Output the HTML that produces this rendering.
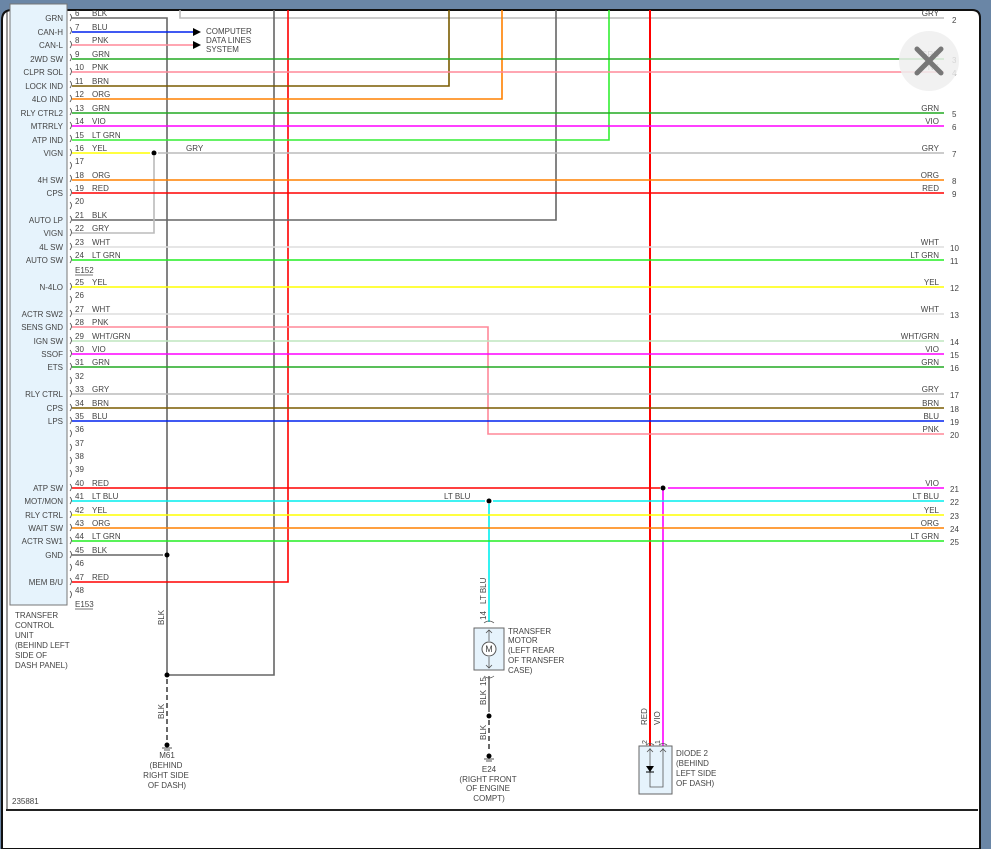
<!DOCTYPE html>
<html><head><meta charset="utf-8"><style>
html,body{margin:0;padding:0;background:#6a86a6;}
svg{display:block;}
text{font-family:"Liberation Sans",sans-serif;font-size:8px;fill:#444;}
</style></head><body>
<svg width="991" height="849" viewBox="0 0 991 849" xmlns="http://www.w3.org/2000/svg">
<rect x="0" y="0" width="991" height="849" fill="#6a86a6"/>
<path d="M2,849 L2,20 Q2,10 12,10 L972,10 Q980,10 980,18 L980,849 Z" fill="#fff" stroke="#111" stroke-width="2"/>
<line x1="7" y1="12" x2="7" y2="810" stroke="#333" stroke-width="1"/>
<line x1="6" y1="810" x2="978" y2="810" stroke="#222" stroke-width="2"/>
<rect x="10" y="4" width="57" height="601" fill="#e6f3fc" stroke="#777" stroke-width="1"/>
<g fill="none" stroke-width="1.6">
<!-- verticals from top -->
<polyline points="72,18 167,18 167,675" stroke="#666"/>
<polyline points="180,10 180,18 944,18" stroke="#bbb"/>
<polyline points="274,10 274,675 167,675" stroke="#666"/>
<polyline points="288,10 288,582 72,582" stroke="#f00"/>
<polyline points="449,10 449,86 72,86" stroke="#7a5c00"/>
<polyline points="502,10 502,99 72,99" stroke="#ff8000"/>
<polyline points="556,10 556,220 72,220" stroke="#666"/>
<polyline points="609,10 609,140 72,140" stroke="#33ee33"/>
<line x1="650" y1="10" x2="650" y2="746" stroke="#f00" stroke-width="2"/>
<polyline points="663,488 663,746" stroke="#f0f"/>
<polyline points="72,153 150,153" stroke="#ff0"/>
<polyline points="158,153 944,153" stroke="#bbb"/>
<polyline points="154,156 154,233 72,233" stroke="#bbb"/>
<line x1="72" y1="32" x2="193" y2="32" stroke="#0022ee"/>
<line x1="72" y1="45" x2="193" y2="45" stroke="#ff8899"/>
<line x1="72" y1="59" x2="944" y2="59" stroke="#22aa22"/>
<line x1="72" y1="72" x2="944" y2="72" stroke="#ff8899"/>
<line x1="72" y1="113" x2="944" y2="113" stroke="#22aa22"/>
<line x1="72" y1="126" x2="944" y2="126" stroke="#f0f"/>
<line x1="72" y1="180" x2="944" y2="180" stroke="#ff8000"/>
<line x1="72" y1="193" x2="944" y2="193" stroke="#f00"/>
<line x1="72" y1="247" x2="944" y2="247" stroke="#ddd"/>
<line x1="72" y1="260" x2="944" y2="260" stroke="#22ee22"/>
<line x1="72" y1="287" x2="944" y2="287" stroke="#ff0"/>
<line x1="72" y1="314" x2="944" y2="314" stroke="#ddd"/>
<polyline points="72,327 488,327 488,434 944,434" stroke="#ff8899"/>
<line x1="72" y1="341" x2="944" y2="341" stroke="#bfe6bf"/>
<line x1="72" y1="354" x2="944" y2="354" stroke="#f0f"/>
<line x1="72" y1="367" x2="944" y2="367" stroke="#22aa22"/>
<line x1="72" y1="394" x2="944" y2="394" stroke="#bbb"/>
<line x1="72" y1="408" x2="944" y2="408" stroke="#7a5c00"/>
<line x1="72" y1="421" x2="944" y2="421" stroke="#0022ee"/>
<line x1="72" y1="488" x2="660" y2="488" stroke="#f00"/>
<line x1="668" y1="488" x2="944" y2="488" stroke="#f0f"/>
<line x1="72" y1="501" x2="485" y2="501" stroke="#00eeee"/>
<line x1="493" y1="501" x2="944" y2="501" stroke="#00eeee"/>
<line x1="489" y1="504" x2="489" y2="622" stroke="#00eeee"/>
<line x1="72" y1="515" x2="944" y2="515" stroke="#ff0"/>
<line x1="72" y1="528" x2="944" y2="528" stroke="#ff8000"/>
<line x1="72" y1="541" x2="944" y2="541" stroke="#22ee22"/>
<line x1="72" y1="555" x2="163" y2="555" stroke="#666"/>
<line x1="489" y1="676" x2="489" y2="712" stroke="#666"/>
<line x1="167" y1="679" x2="167" y2="742" stroke="#444" stroke-dasharray="5,3"/>
<line x1="489" y1="720" x2="489" y2="752" stroke="#444" stroke-dasharray="5,3"/>
</g>
<!-- arrows -->
<polygon points="193,28 201,32 193,36" fill="#000"/>
<polygon points="193,41 201,45 193,49" fill="#000"/>
<text x="206" y="34">COMPUTER</text><text x="206" y="43">DATA LINES</text><text x="206" y="52">SYSTEM</text>
<!-- dots -->
<g fill="#000"><circle cx="154" cy="153" r="2.5"/><circle cx="167" cy="555" r="2.5"/><circle cx="167" cy="675" r="2.5"/><circle cx="489" cy="501" r="2.5"/><circle cx="663" cy="488" r="2.5"/><circle cx="489" cy="716" r="2.5"/><circle cx="167" cy="745" r="2.5"/><circle cx="489" cy="756" r="2.5"/></g>
<g stroke="#555" stroke-width="1"><line x1="162" y1="748" x2="172" y2="748"/><line x1="164" y1="750" x2="170" y2="750"/><line x1="484" y1="759" x2="494" y2="759"/><line x1="486" y1="761" x2="492" y2="761"/></g>
<!-- pin labels -->
<g>
<text x="63" y="21" text-anchor="end">GRN</text>
<text x="63" y="35" text-anchor="end">CAN-H</text>
<text x="63" y="48" text-anchor="end">CAN-L</text>
<text x="63" y="62" text-anchor="end">2WD SW</text>
<text x="63" y="75" text-anchor="end">CLPR SOL</text>
<text x="63" y="89" text-anchor="end">LOCK IND</text>
<text x="63" y="102" text-anchor="end">4LO IND</text>
<text x="63" y="116" text-anchor="end">RLY CTRL2</text>
<text x="63" y="129" text-anchor="end">MTRRLY</text>
<text x="63" y="143" text-anchor="end">ATP IND</text>
<text x="63" y="156" text-anchor="end">VIGN</text>
<text x="63" y="183" text-anchor="end">4H SW</text>
<text x="63" y="196" text-anchor="end">CPS</text>
<text x="63" y="223" text-anchor="end">AUTO LP</text>
<text x="63" y="236" text-anchor="end">VIGN</text>
<text x="63" y="250" text-anchor="end">4L SW</text>
<text x="63" y="263" text-anchor="end">AUTO SW</text>
<text x="63" y="290" text-anchor="end">N-4LO</text>
<text x="63" y="317" text-anchor="end">ACTR SW2</text>
<text x="63" y="330" text-anchor="end">SENS GND</text>
<text x="63" y="344" text-anchor="end">IGN SW</text>
<text x="63" y="357" text-anchor="end">SSOF</text>
<text x="63" y="370" text-anchor="end">ETS</text>
<text x="63" y="397" text-anchor="end">RLY CTRL</text>
<text x="63" y="411" text-anchor="end">CPS</text>
<text x="63" y="424" text-anchor="end">LPS</text>
<text x="63" y="491" text-anchor="end">ATP SW</text>
<text x="63" y="504" text-anchor="end">MOT/MON</text>
<text x="63" y="518" text-anchor="end">RLY CTRL</text>
<text x="63" y="531" text-anchor="end">WAIT SW</text>
<text x="63" y="544" text-anchor="end">ACTR SW1</text>
<text x="63" y="558" text-anchor="end">GND</text>
<text x="63" y="585" text-anchor="end">MEM B/U</text>
</g>
<!-- pin numbers & wire color labels -->
<g>
<text x="75" y="16">6</text><text x="92" y="16">BLK</text>
<text x="75" y="30">7</text><text x="92" y="30">BLU</text>
<text x="75" y="43">8</text><text x="92" y="43">PNK</text>
<text x="75" y="57">9</text><text x="92" y="57">GRN</text>
<text x="75" y="70">10</text><text x="92" y="70">PNK</text>
<text x="75" y="84">11</text><text x="92" y="84">BRN</text>
<text x="75" y="97">12</text><text x="92" y="97">ORG</text>
<text x="75" y="111">13</text><text x="92" y="111">GRN</text>
<text x="75" y="124">14</text><text x="92" y="124">VIO</text>
<text x="75" y="138">15</text><text x="92" y="138">LT GRN</text>
<text x="75" y="151">16</text><text x="92" y="151">YEL</text><text x="186" y="151">GRY</text>
<text x="75" y="164">17</text>
<text x="75" y="178">18</text><text x="92" y="178">ORG</text>
<text x="75" y="191">19</text><text x="92" y="191">RED</text>
<text x="75" y="204">20</text>
<text x="75" y="218">21</text><text x="92" y="218">BLK</text>
<text x="75" y="231">22</text><text x="92" y="231">GRY</text>
<text x="75" y="245">23</text><text x="92" y="245">WHT</text>
<text x="75" y="258">24</text><text x="92" y="258">LT GRN</text>
<text x="75" y="273">E152</text><line x1="75" y1="275" x2="93" y2="275" stroke="#444" stroke-width="0.8"/>
<text x="75" y="285">25</text><text x="92" y="285">YEL</text>
<text x="75" y="298">26</text>
<text x="75" y="312">27</text><text x="92" y="312">WHT</text>
<text x="75" y="325">28</text><text x="92" y="325">PNK</text>
<text x="75" y="339">29</text><text x="92" y="339">WHT/GRN</text>
<text x="75" y="352">30</text><text x="92" y="352">VIO</text>
<text x="75" y="365">31</text><text x="92" y="365">GRN</text>
<text x="75" y="379">32</text>
<text x="75" y="392">33</text><text x="92" y="392">GRY</text>
<text x="75" y="406">34</text><text x="92" y="406">BRN</text>
<text x="75" y="419">35</text><text x="92" y="419">BLU</text>
<text x="75" y="432">36</text>
<text x="75" y="446">37</text>
<text x="75" y="459">38</text>
<text x="75" y="472">39</text>
<text x="75" y="486">40</text><text x="92" y="486">RED</text>
<text x="75" y="499">41</text><text x="92" y="499">LT BLU</text><text x="444" y="499">LT BLU</text>
<text x="75" y="513">42</text><text x="92" y="513">YEL</text>
<text x="75" y="526">43</text><text x="92" y="526">ORG</text>
<text x="75" y="539">44</text><text x="92" y="539">LT GRN</text>
<text x="75" y="553">45</text><text x="92" y="553">BLK</text>
<text x="75" y="566">46</text>
<text x="75" y="580">47</text><text x="92" y="580">RED</text>
<text x="75" y="593">48</text>
<text x="75" y="607">E153</text><line x1="75" y1="609" x2="93" y2="609" stroke="#444" stroke-width="0.8"/>
</g>
<!-- connector arcs -->
<g fill="none" stroke="#444" stroke-width="0.8">
<path d="M70,14 q3,3 0,7 M70,27 q3,3 0,7 M70,41 q3,3 0,7 M70,54 q3,3 0,7 M70,68 q3,3 0,7 M70,81 q3,3 0,7 M70,95 q3,3 0,7 M70,108 q3,3 0,7 M70,122 q3,3 0,7 M70,135 q3,3 0,7 M70,149 q3,3 0,7 M70,162 q3,3 0,7 M70,175 q3,3 0,7 M70,189 q3,3 0,7 M70,202 q3,3 0,7 M70,216 q3,3 0,7 M70,229 q3,3 0,7 M70,243 q3,3 0,7 M70,256 q3,3 0,7"/>
<path d="M70,283 q3,3 0,7 M70,296 q3,3 0,7 M70,310 q3,3 0,7 M70,323 q3,3 0,7 M70,337 q3,3 0,7 M70,350 q3,3 0,7 M70,363 q3,3 0,7 M70,377 q3,3 0,7 M70,390 q3,3 0,7 M70,404 q3,3 0,7 M70,417 q3,3 0,7 M70,430 q3,3 0,7 M70,444 q3,3 0,7 M70,457 q3,3 0,7 M70,470 q3,3 0,7 M70,484 q3,3 0,7 M70,497 q3,3 0,7 M70,511 q3,3 0,7 M70,524 q3,3 0,7 M70,537 q3,3 0,7 M70,551 q3,3 0,7 M70,564 q3,3 0,7 M70,578 q3,3 0,7 M70,591 q3,3 0,7"/>
</g>
<!-- right labels -->
<g text-anchor="end">
<text x="939" y="16">GRY</text><text x="939" y="57">GRN</text><text x="939" y="70">PNK</text>
<text x="939" y="111">GRN</text><text x="939" y="124">VIO</text><text x="939" y="151">GRY</text>
<text x="939" y="178">ORG</text><text x="939" y="191">RED</text><text x="939" y="245">WHT</text>
<text x="939" y="258">LT GRN</text><text x="939" y="285">YEL</text><text x="939" y="312">WHT</text>
<text x="939" y="339">WHT/GRN</text><text x="939" y="352">VIO</text><text x="939" y="365">GRN</text>
<text x="939" y="392">GRY</text><text x="939" y="406">BRN</text><text x="939" y="419">BLU</text>
<text x="939" y="432">PNK</text><text x="939" y="486">VIO</text><text x="939" y="499">LT BLU</text>
<text x="939" y="513">YEL</text><text x="939" y="526">ORG</text><text x="939" y="539">LT GRN</text>
</g>
<g>
<text x="952" y="23">2</text><text x="952" y="63">3</text><text x="952" y="76">4</text><text x="952" y="117">5</text><text x="952" y="130">6</text><text x="952" y="157">7</text><text x="952" y="184">8</text><text x="952" y="197">9</text>
<text x="950" y="251">10</text><text x="950" y="264">11</text><text x="950" y="291">12</text><text x="950" y="318">13</text><text x="950" y="345">14</text><text x="950" y="358">15</text><text x="950" y="371">16</text><text x="950" y="398">17</text><text x="950" y="412">18</text><text x="950" y="425">19</text><text x="950" y="438">20</text><text x="950" y="492">21</text><text x="950" y="505">22</text><text x="950" y="519">23</text><text x="950" y="532">24</text><text x="950" y="545">25</text>
</g>
<!-- close button -->
<circle cx="929" cy="61" r="30" fill="#eee" fill-opacity="0.85"/>
<g stroke="#777" stroke-width="5" stroke-linecap="round"><line x1="917" y1="49" x2="941" y2="73"/><line x1="941" y1="49" x2="917" y2="73"/></g>
<!-- TCU label -->
<g><text x="15" y="618">TRANSFER</text><text x="15" y="628">CONTROL</text><text x="15" y="638">UNIT</text><text x="15" y="648">(BEHIND LEFT</text><text x="15" y="658">SIDE OF</text><text x="15" y="668">DASH PANEL)</text></g>
<text transform="translate(164,625) rotate(-90)">BLK</text>
<text transform="translate(164,719) rotate(-90)">BLK</text>
<g text-anchor="middle"><text x="167" y="758">M61</text><text x="166" y="768">(BEHIND</text><text x="166" y="778">RIGHT SIDE</text><text x="167" y="788">OF DASH)</text></g>
<!-- motor -->
<text transform="translate(486,604) rotate(-90)">LT BLU</text>
<text transform="translate(486,620) rotate(-90)">14</text>
<rect x="474" y="628" width="30" height="42" fill="#e6f3fc" stroke="#666"/>
<circle cx="489" cy="649" r="7" fill="#fff" stroke="#555"/>
<text x="489" y="652" text-anchor="middle" style="font-size:9px">M</text>
<g stroke="#555" fill="none" stroke-width="0.8"><path d="M489,630 V641 M489,657 V668 M486,633 l3,-3 l3,3 M486,665 l3,3 l3,-3 M484,623 q5,-4 10,0 M484,676 q5,4 10,0"/></g>
<g><text x="508" y="634">TRANSFER</text><text x="508" y="643">MOTOR</text><text x="508" y="653">(LEFT REAR</text><text x="508" y="663">OF TRANSFER</text><text x="508" y="673">CASE)</text></g>
<text transform="translate(486,686) rotate(-90)">15</text>
<text transform="translate(486,705) rotate(-90)">BLK</text>
<text transform="translate(486,740) rotate(-90)">BLK</text>
<g text-anchor="middle"><text x="489" y="772">E24</text><text x="488" y="782">(RIGHT FRONT</text><text x="488" y="791">OF ENGINE</text><text x="489" y="801">COMPT)</text></g>
<!-- diode -->
<text transform="translate(647,725) rotate(-90)">RED</text>
<text transform="translate(660,725) rotate(-90)">VIO</text>
<text transform="translate(647,744) rotate(-90)" style="font-size:7px">2</text>
<text transform="translate(660,744) rotate(-90)" style="font-size:7px">1</text>
<rect x="639" y="746" width="33" height="48" fill="#e6f3fc" stroke="#666"/>
<g stroke="#555" fill="none" stroke-width="0.8"><path d="M650,748 V787 H663 V748 M647,752 l3,-3 l3,3 M660,752 l3,-3 l3,3 M646,745 q4,-3 8,0 M659,745 q4,-3 8,0"/></g>
<polygon points="646,766 654,766 650,772" fill="#000"/><line x1="646" y1="772" x2="654" y2="772" stroke="#000"/>
<g><text x="676" y="756">DIODE 2</text><text x="676" y="766">(BEHIND</text><text x="676" y="776">LEFT SIDE</text><text x="676" y="786">OF DASH)</text></g>
<text x="12" y="804">235881</text>
</svg>
</body></html>
